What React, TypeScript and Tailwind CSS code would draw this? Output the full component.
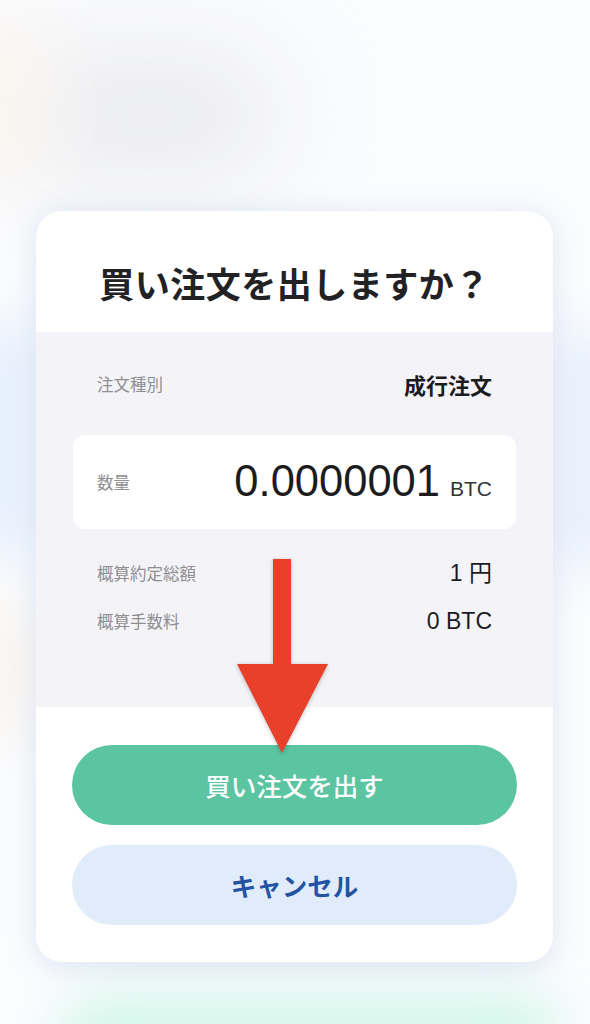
import React from 'react'

const JP = "font-['Noto_Sans_CJK_JP',sans-serif]"

function Row({ label, value }: { label: string; value: React.ReactNode }) {
  return (
    <div className="flex items-center justify-between px-[61px] h-[48px]">
      <span className="text-[16.5px] text-[#8e8e93]">{label}</span>
      <span className="font-['Liberation_Sans','Noto_Sans_CJK_JP',sans-serif] text-[23px] text-[#1c1c1e]">{value}</span>
    </div>
  )
}

export default function App() {
  return (
    <div className={`relative min-h-[1024px] w-[590px] overflow-hidden bg-[#fbfcfe] ${JP}`}>
      {/* ぼかした背景 */}
      <div className="absolute left-[20px] top-[50px] w-[260px] h-[130px] rounded-full bg-[#ebebef] blur-[50px]" />
      <div className="absolute left-[-60px] top-[20px] w-[100px] h-[160px] rounded-full bg-[#faf4ec] blur-[40px]" />
      <div className="absolute left-[-30px] top-[320px] w-[60px] h-[240px] rounded-full bg-[#e2eefc] blur-[25px]" />
      <div className="absolute left-[-30px] top-[600px] w-[60px] h-[140px] rounded-full bg-[#f9f4ee] blur-[25px]" />
      <div className="absolute right-[-30px] top-[330px] w-[60px] h-[240px] rounded-full bg-[#e4eefc] blur-[25px]" />
      <div className="absolute left-[60px] top-[995px] w-[500px] h-[80px] rounded-full bg-[#d3f6ea] blur-[25px]" />

      <div className="relative pt-[211px] px-[36px]">
        <div className="relative w-[517px] rounded-[26px] bg-white overflow-hidden shadow-[0_4px_30px_rgba(110,140,200,0.22)]">
          {/* タイトル */}
          <div className="h-[121px] flex items-start justify-center pt-[49px]">
            <h1 className="text-[35px] leading-[46px] font-bold text-[#222224] tracking-[0.5px]">
              買い注文を出しますか？
            </h1>
          </div>

          {/* 注文内容 */}
          <div className="bg-[#f4f4f8] h-[375px] pt-[28px]">
            <div className="flex items-center justify-between px-[61px] h-[48px]">
              <span className="text-[16.5px] text-[#8e8e93]">注文種別</span>
              <span className="text-[22px] font-bold text-[#1c1c1e]">成行注文</span>
            </div>
            <div className="mx-[37px] mt-[27px] h-[94px] rounded-[12px] bg-white flex items-center justify-between px-[24px]">
              <span className="text-[16.5px] text-[#8e8e93]">数量</span>
              <span className="flex items-baseline gap-[10px] font-['Liberation_Sans',sans-serif] text-[#1c1c1e]">
                <span className="text-[43.5px] leading-none">0.0000001</span>
                <span className="text-[21px] leading-none text-[#333336]">BTC</span>
              </span>
            </div>
            <div className="mt-[20px]">
              <Row label="概算約定総額" value="1 円" />
              <Row label="概算手数料" value="0 BTC" />
            </div>
          </div>

          {/* ボタン */}
          <div className="px-[36px] pt-[38px] pb-[37px] flex flex-col gap-[20px]">
            <button className="h-[80px] w-full rounded-full bg-[#5bc4a0] text-white text-[25.5px] font-medium">
              買い注文を出す
            </button>
            <button className="h-[80px] w-full rounded-full bg-[#e1ecfb] text-[#2354a4] text-[25.5px] font-bold">
              キャンセル
            </button>
          </div>

          {/* 矢印 */}
          <svg
            className="absolute left-[201px] top-[348px] drop-shadow-[0_1px_2px_rgba(0,0,0,0.25)]"
            width="91"
            height="195"
            viewBox="0 0 91 195"
          >
            <rect x="36" y="0" width="18" height="106" fill="#e8402a" />
            <polygon points="0,105 91,105 45,194" fill="#e8402a" />
          </svg>
        </div>
      </div>
    </div>
  )
}
